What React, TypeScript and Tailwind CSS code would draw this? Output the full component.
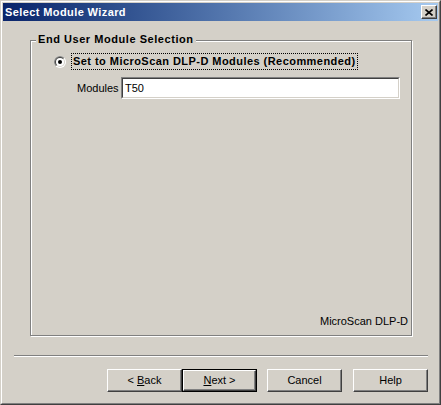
import React from "react";

function Radio() {
  return (
    <svg width="12" height="12" viewBox="0 0 12 12" className="shrink-0">
      <defs>
        <clipPath id="tl">
          <polygon points="0,0 12,0 0,12" />
        </clipPath>
      </defs>
      <circle cx="6" cy="6" r="6" fill="#ffffff" />
      <circle cx="6" cy="6" r="6" fill="#808080" clipPath="url(#tl)" />
      <circle cx="6" cy="6" r="5" fill="#d4d0c8" />
      <circle cx="6" cy="6" r="5" fill="#404040" clipPath="url(#tl)" />
      <circle cx="6" cy="6" r="4" fill="#ffffff" />
      <circle cx="6" cy="6" r="2" fill="#000000" />
    </svg>
  );
}

function WinButton({
  children,
  isDefault,
  className = "",
}: {
  children: React.ReactNode;
  isDefault?: boolean;
  className?: string;
}) {
  const face = (
    <div className="w-full h-full flex items-center justify-center border border-t-white border-l-white border-r-[#404040] border-b-[#404040] shadow-[inset_-1px_-1px_0_#808080] bg-[#d4d0c8]">
      {children}
    </div>
  );
  return (
    <div
      className={`w-[75px] h-[23px] ${isDefault ? "border border-black" : ""} ${className}`}
    >
      {face}
    </div>
  );
}

export default function App() {
  return (
    <div className="w-[441px] h-[405px] bg-[#d4d0c8] border border-t-[#d4d0c8] border-l-[#d4d0c8] border-r-[#404040] border-b-[#404040] font-['Liberation_Sans',Arial,sans-serif] text-[11px] leading-[13px] text-black">
      <div className="h-full border border-t-white border-l-white border-r-[#808080] border-b-[#808080] p-px flex flex-col">
        {/* Title bar */}
        <div className="h-[18px] shrink-0 flex items-center pl-[2px] pr-[1px] bg-gradient-to-r from-[#0a246a] to-[#a6caf0]">
          <span className="text-white font-bold tracking-[0.4px]">Select Module Wizard</span>
          <div className="ml-auto w-[16px] h-[14px] border border-t-white border-l-white border-r-[#404040] border-b-[#404040] shadow-[inset_-1px_-1px_0_#808080] bg-[#d4d0c8] flex items-center justify-center">
            <svg width="8" height="7" viewBox="0 0 8 7">
              <path d="M0.5 0.5 L7.5 6.5 M7.5 0.5 L0.5 6.5" stroke="#000" strokeWidth="1.6" />
            </svg>
          </div>
        </div>

        {/* Group box */}
        <div className="relative ml-[27px] mt-[19px] w-[382px] h-[296px] border border-[#808080] shadow-[1px_1px_0_#fff,inset_1px_1px_0_#fff] flex flex-col">
          <div className="absolute -top-[8px] left-[5px] px-[2px] bg-[#d4d0c8] font-bold tracking-[0.55px]">
            End User Module Selection
          </div>

          <div className="flex items-center pl-[23px] pt-[12px]">
            <Radio />
            <div className="ml-[5px] h-[17px] w-[287px] border border-dotted border-black flex items-center pl-[1px] font-bold tracking-[0.45px] whitespace-nowrap">
              Set to MicroScan DLP-D Modules (Recommended)
            </div>
          </div>

          <div className="flex items-center ml-[46px] mt-[7px]">
            <span className="w-[44px]">Modules</span>
            <div className="w-[279px] h-[22px] border border-t-[#808080] border-l-[#808080] border-r-white border-b-white">
              <div className="w-full h-full bg-white border border-t-[#404040] border-l-[#404040] border-r-[#d4d0c8] border-b-[#d4d0c8] flex items-center pl-[2px]">
                T50
              </div>
            </div>
          </div>

          <div className="mt-auto self-end pr-[3px] pb-[7px]">MicroScan DLP-D</div>
        </div>

        {/* Separator */}
        <div className="ml-[11px] mt-[19px] w-[414px] h-[2px] border-t border-t-[#808080] border-b border-b-white" />

        {/* Buttons */}
        <div className="flex justify-end pr-[10px] mt-[12px]">
          <WinButton>
            <span>
              &lt; <span className="underline">B</span>ack
            </span>
          </WinButton>
          <WinButton isDefault>
            <span>
              <span className="underline">N</span>ext &gt;
            </span>
          </WinButton>
          <WinButton className="ml-[10px]">Cancel</WinButton>
          <WinButton className="ml-[11px]">Help</WinButton>
        </div>
      </div>
    </div>
  );
}
